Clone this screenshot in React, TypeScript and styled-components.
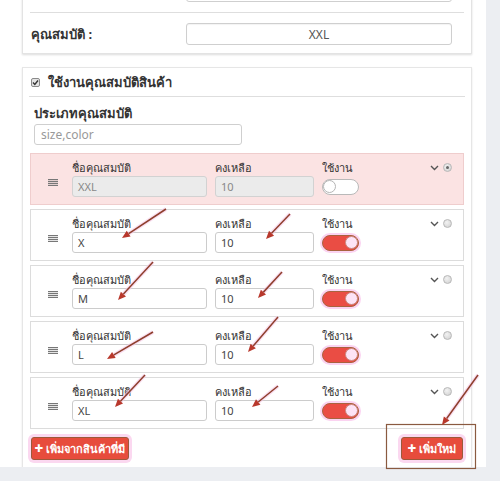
import React from "react";
import styled, { createGlobalStyle } from "styled-components";

const Global = createGlobalStyle`
  html, body { margin: 0; padding: 0; background: #ffffff; }
  body { font-family: "Noto Sans", "Liberation Sans", "DejaVu Sans", sans-serif; color: #333; }
  * { box-sizing: border-box; }
`;

const Page = styled.div`
  position: relative;
  width: 500px;
  height: 481px;
  background: #eceef2;
  overflow: hidden;
`;

const Canvas = styled.div`
  width: 486px;
  height: 467px;
  background: #ffffff;
  padding: 0 14px 0 22px;
  overflow: hidden;
`;

const TopPanel = styled.div`
  margin-top: -30px;
  background: #fff;
  border: 1px solid #e3e3e3;
  box-shadow: 0 1px 2px rgba(0, 0, 0, 0.14);
  padding: 9px 8px 8px 8px;
`;

const FieldRow = styled.div`
  display: grid;
  grid-template-columns: 155px 266px;
  align-items: center;
`;

const PropLabel = styled.div`
  font-size: 13px;
  font-weight: 700;
  color: #333;
`;

const WideInput = styled.div<{ $center?: boolean }>`
  height: 22px;
  border: 1px solid #cfcfcf;
  border-radius: 3px;
  background: #fff;
  font-size: 12px;
  color: #555;
  display: flex;
  align-items: center;
  justify-content: ${(p) => (p.$center ? "center" : "flex-start")};
  box-shadow: inset 0 1px 1px rgba(0, 0, 0, 0.05);
`;

const Divider = styled.div<{ $m?: number }>`
  height: 1px;
  background: #dedede;
  margin: ${(p) => p.$m ?? 10}px -1px;
`;

const Panel = styled.div`
  margin-top: 13px;
  height: 401px;
  background: #fff;
  border: 1px solid #e6e6e6;
  box-shadow: 0 1px 2px rgba(0, 0, 0, 0.1);
  padding: 0 7px 7px 7px;
  display: flex;
  flex-direction: column;
`;

const PanelHeader = styled.div`
  height: 28px;
  display: flex;
  align-items: center;
  gap: 8px;
  padding-left: 1px;
  padding-top: 1px;
`;

const CheckBox = styled.span`
  width: 9px;
  height: 9px;
  border: 1px solid #8a8a8a;
  border-radius: 2px;
  background: #e4e4e4;
  display: inline-flex;
  align-items: center;
  justify-content: center;
`;

const HeaderTitle = styled.div`
  font-size: 13px;
  font-weight: 700;
  color: #333;
`;

const TypeBlock = styled.div`
  padding-left: 4px;
  display: flex;
  flex-direction: column;
`;

const SubTitle = styled.div`
  font-size: 13px;
  font-weight: 700;
  line-height: 16px;
  margin-top: 8px;
  color: #333;
`;

const TypeInput = styled.div`
  margin-top: 3px;
  width: 208px;
  height: 21px;
  border: 1px solid #cfcfcf;
  border-radius: 3px;
  font-size: 12px;
  color: #999;
  padding-left: 6px;
  display: flex;
  align-items: center;
`;

const RowList = styled.div`
  margin-top: 8px;
  display: flex;
  flex-direction: column;
  gap: 4px;
`;

const Row = styled.div<{ $hl?: boolean }>`
  height: 52px;
  display: flex;
  align-items: flex-start;
  background: ${(p) => (p.$hl ? "#fbe3e3" : "#ffffff")};
  border: 1px solid ${(p) => (p.$hl ? "#efcdcd" : "#dcdcdc")};
  padding: 6px 11px 0 0;
`;

const Handle = styled.div`
  width: 41px;
  align-self: center;
  display: flex;
  justify-content: center;
  padding-left: 3px;
`;

const Field = styled.div<{ $w: number }>`
  width: ${(p) => p.$w}px;
  display: flex;
  flex-direction: column;
  margin-right: 8px;
`;

const FieldLabel = styled.div`
  font-size: 11px;
  line-height: 16px;
  color: #333;
`;

const SmallInput = styled.div<{ $disabled?: boolean }>`
  height: 21px;
  border: 1px solid ${(p) => (p.$disabled ? "#d2d2d2" : "#cccccc")};
  border-radius: 3px;
  background: ${(p) => (p.$disabled ? "#ebebeb" : "#ffffff")};
  color: ${(p) => (p.$disabled ? "#888" : "#444")};
  font-size: 11px;
  padding-left: 5px;
  display: flex;
  align-items: center;
`;

const ToggleWrap = styled.div`
  height: 21px;
  display: flex;
  align-items: center;
`;

const Toggle = styled.div<{ $on?: boolean }>`
  width: 37px;
  height: 16px;
  border-radius: 8px;
  border: 1.5px solid ${(p) => (p.$on ? "#a8633f" : "#b9b9b9")};
  background: ${(p) => (p.$on ? "#ea4d44" : "#ffffff")};
  position: relative;
  box-shadow: ${(p) => (p.$on ? "0 0 0 2px #fbd3f1" : "none")};
  &::after {
    content: "";
    position: absolute;
    top: 0px;
    ${(p) => (p.$on ? "right: 0px;" : "left: 0px;")}
    width: 13px;
    height: 13px;
    border-radius: 50%;
    background: ${(p) => (p.$on ? "#fde3f6" : "#ffffff")};
    border: 1px solid ${(p) => (p.$on ? "#c98a80" : "#b5b5b5")};
    box-sizing: border-box;
  }
`;

const Controls = styled.div`
  margin-left: auto;
  display: flex;
  align-items: center;
  gap: 4px;
  padding-top: 3px;
`;

const Radio = styled.span<{ $on?: boolean }>`
  width: 9px;
  height: 9px;
  border-radius: 50%;
  border: 1px solid #b8b8b8;
  background: radial-gradient(circle at 40% 35%, #f2f2f2, #cfcfcf);
  display: inline-flex;
  align-items: center;
  justify-content: center;
  &::after {
    content: "";
    width: 3px;
    height: 3px;
    border-radius: 50%;
    background: ${(p) => (p.$on ? "#666" : "transparent")};
  }
`;

const Footer = styled.div`
  margin-top: 8px;
  display: flex;
  justify-content: space-between;
  padding: 0 1px;
`;

const RedButton = styled.div<{ $w: number }>`
  width: ${(p) => p.$w}px;
  height: 23px;
  background: #e74c3c;
  border: 1px solid #9b5a3a;
  border-radius: 3px;
  color: #fff;
  font-size: 11px;
  font-weight: 700;
  display: flex;
  align-items: center;
  justify-content: center;
  gap: 3px;
  box-shadow: 0 0 0 3px #fbd8f0;
`;

const Plus = styled.span`
  font-size: 15px;
  font-weight: 900;
  line-height: 1;
  margin-top: -1px;
`;

const Overlay = styled.svg`
  position: absolute;
  left: 0;
  top: 0;
  width: 500px;
  height: 481px;
  pointer-events: none;
`;

const HamburgerIcon = () => (
  <svg width="10" height="7" viewBox="0 0 10 7">
    <rect x="0" y="0" width="10" height="1.2" fill="#777" />
    <rect x="0" y="2" width="10" height="1.2" fill="#777" />
    <rect x="0" y="4" width="10" height="1.2" fill="#777" />
    <rect x="0" y="6" width="10" height="1" fill="#777" />
  </svg>
);

const Chevron = () => (
  <svg width="9" height="6" viewBox="0 0 9 6">
    <path d="M1 1 L4.5 4.5 L8 1" fill="none" stroke="#555" strokeWidth="1.4" />
  </svg>
);

const rows = [
  { name: "XXL", qty: "10", on: false, hl: true },
  { name: "X", qty: "10", on: true },
  { name: "M", qty: "10", on: true },
  { name: "L", qty: "10", on: true },
  { name: "XL", qty: "10", on: true },
];

const arrows: [number, number, number, number][] = [
  [166, 209, 122, 238],
  [290, 214, 266, 239],
  [153, 262, 118, 300],
  [282, 272, 258, 298],
  [153, 332, 107, 359],
  [278, 317, 248, 352],
  [145, 375, 115, 407],
  [278, 386, 252, 407],
  [478, 375, 442, 425],
];

function Arrow({ a }: { a: [number, number, number, number] }) {
  const [x1, y1, x2, y2] = a;
  const dx = x2 - x1;
  const dy = y2 - y1;
  const len = Math.hypot(dx, dy);
  const ux = dx / len;
  const uy = dy / len;
  const hl = 8;
  const hw = 3.5;
  const bx = x2 - ux * hl;
  const by = y2 - uy * hl;
  const p1 = `${x2},${y2}`;
  const p2 = `${bx - uy * hw},${by + ux * hw}`;
  const p3 = `${bx + uy * hw},${by - ux * hw}`;
  return (
    <g>
      <line x1={x1} y1={y1} x2={bx} y2={by} stroke="#f7c9e8" strokeWidth="4" strokeOpacity="0.6" />
      <line x1={x1} y1={y1} x2={bx} y2={by} stroke="#8e3f2c" strokeWidth="1.5" />
      <polygon points={`${p1} ${p2} ${p3}`} fill="#b8382c" />
    </g>
  );
}

export default function App() {
  return (
    <Page>
      <Global />
      <Canvas>
        <TopPanel>
          <FieldRow>
            <span />
            <WideInput />
          </FieldRow>
          <Divider />
          <FieldRow>
            <PropLabel>คุณสมบัติ :</PropLabel>
            <WideInput $center>XXL</WideInput>
          </FieldRow>
        </TopPanel>
        <Panel>
          <PanelHeader>
            <CheckBox>
              <svg width="7" height="7" viewBox="0 0 7 7">
                <path d="M1 3.6 L2.8 5.4 L6 1.5" fill="none" stroke="#333" strokeWidth="1.4" />
              </svg>
            </CheckBox>
            <HeaderTitle>ใช้งานคุณสมบัติสินค้า</HeaderTitle>
          </PanelHeader>
          <Divider $m={0} />
          <TypeBlock>
            <SubTitle>ประเภทคุณสมบัติ</SubTitle>
            <TypeInput>size,color</TypeInput>
          </TypeBlock>
          <RowList>
            {rows.map((r, i) => (
              <Row key={i} $hl={r.hl}>
                <Handle>
                  <HamburgerIcon />
                </Handle>
                <Field $w={135}>
                  <FieldLabel>ชื่อคุณสมบัติ</FieldLabel>
                  <SmallInput $disabled={r.hl}>{r.name}</SmallInput>
                </Field>
                <Field $w={99}>
                  <FieldLabel>คงเหลือ</FieldLabel>
                  <SmallInput $disabled={r.hl}>{r.qty}</SmallInput>
                </Field>
                <Field $w={40}>
                  <FieldLabel>ใช้งาน</FieldLabel>
                  <ToggleWrap>
                    <Toggle $on={r.on} />
                  </ToggleWrap>
                </Field>
                <Controls>
                  <Chevron />
                  <Radio $on={r.hl} />
                </Controls>
              </Row>
            ))}
          </RowList>
          <Footer>
            <RedButton $w={98}>
              <Plus>+</Plus>เพิ่มจากสินค้าที่มี
            </RedButton>
            <RedButton $w={62}>
              <Plus>+</Plus>เพิ่มใหม่
            </RedButton>
          </Footer>
        </Panel>
      </Canvas>
      <Overlay viewBox="0 0 500 481">
        <rect x="386.5" y="424.5" width="89" height="44" fill="none" stroke="#8a5a40" strokeWidth="1.2" />
        {arrows.map((a, i) => (
          <Arrow key={i} a={a} />
        ))}
      </Overlay>
    </Page>
  );
}
